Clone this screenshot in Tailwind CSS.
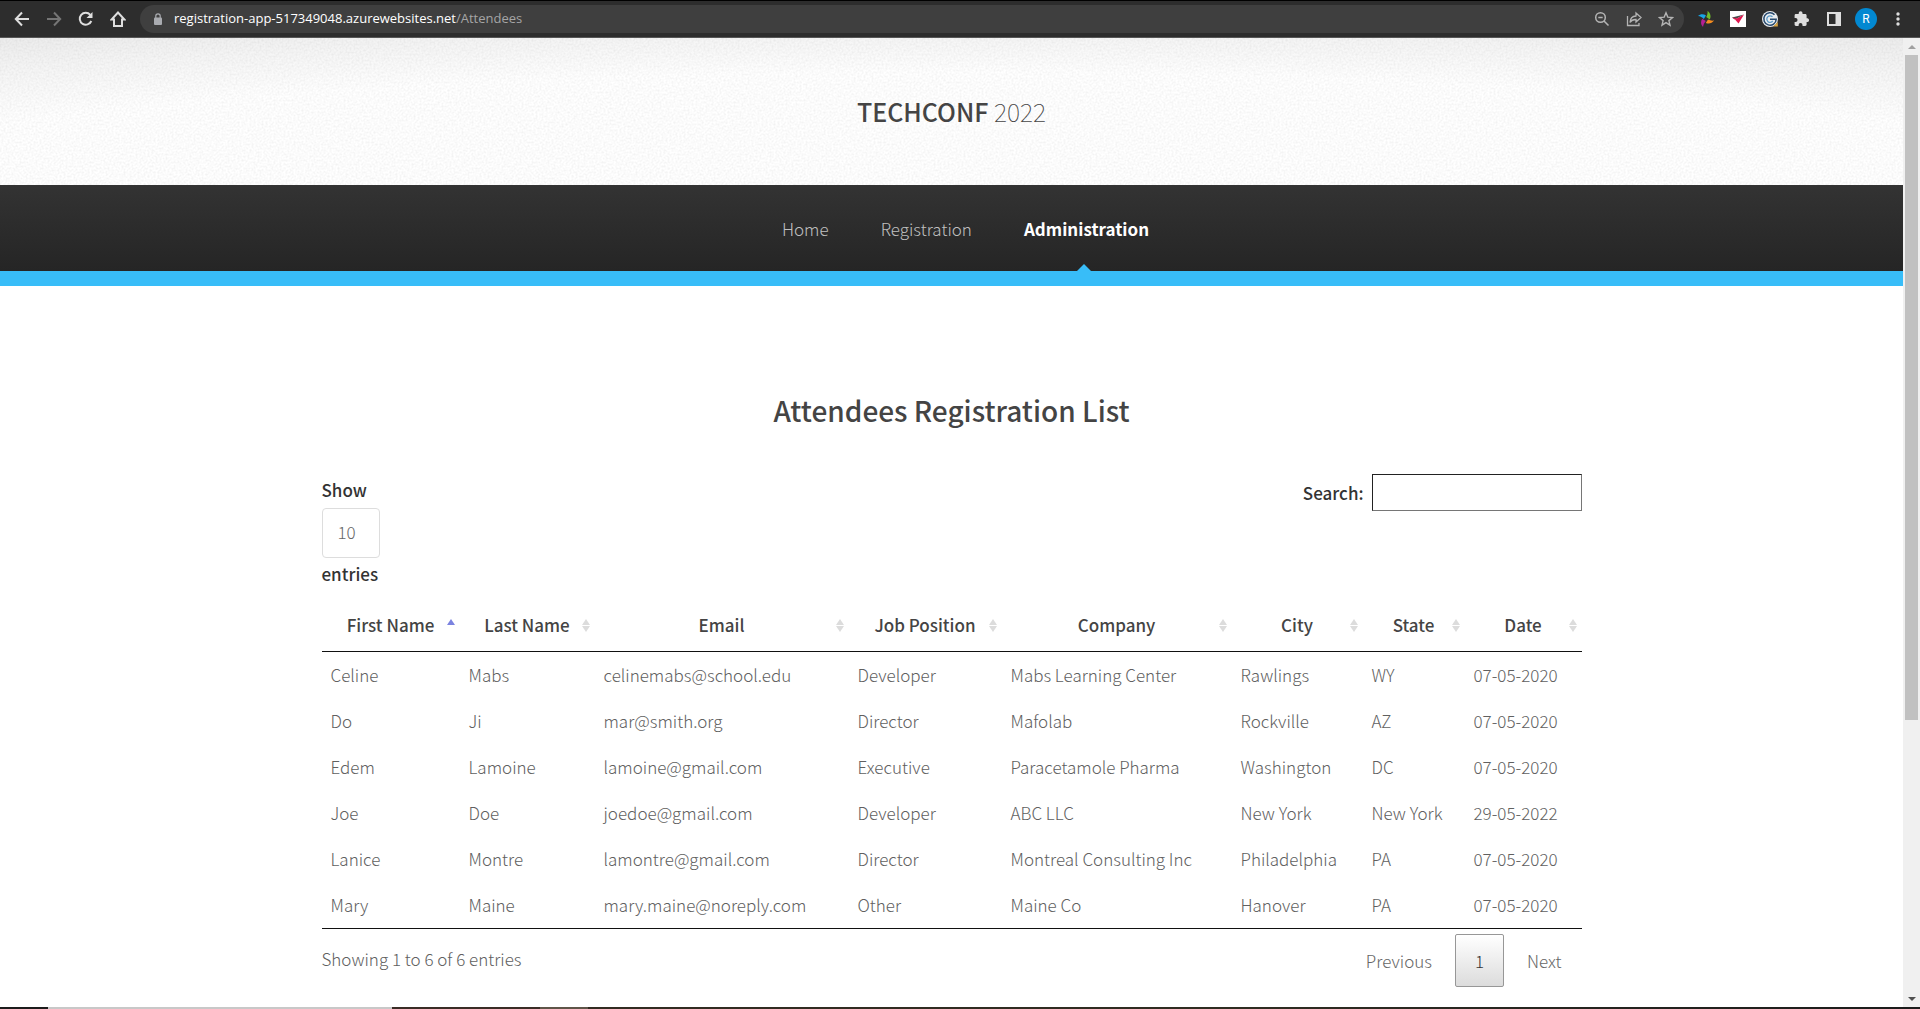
<!DOCTYPE html>
<html lang="en">
<head>
<meta charset="utf-8">
<title>TechConf 2022 - Attendees</title>
<script src="https://cdn.jsdelivr.net/npm/@tailwindcss/browser@4"></script>
</head>
<body class="flex h-screen flex-col overflow-hidden bg-white font-['Source_Sans_Pro','Noto_Sans_CJK_SC',sans-serif] text-[17px] font-light text-[#606060]">

<!-- Browser toolbar -->
<div class="flex h-[38px] shrink-0 items-center gap-4 border-t border-b border-t-black border-b-[#575757] bg-[#2d2d2d] pr-3.5 pl-3.5 text-[#dedede]">
  <button aria-label="Back" class="size-4"><svg viewBox="0 0 16 16" class="size-4" fill="none" stroke="currentColor" stroke-width="2"><path d="M15 8H2M8 1.500 1.800 8 8 14.500"/></svg></button>
  <button aria-label="Forward" class="size-4 text-[#757575]"><svg viewBox="0 0 16 16" class="size-4" fill="none" stroke="currentColor" stroke-width="2"><path d="M1 8h13M8 1.500 14.200 8 8 14.500"/></svg></button>
  <button aria-label="Reload" class="size-4"><svg viewBox="0 0 16 16" class="size-4" fill="none" stroke="currentColor" stroke-width="2"><path d="M13.300 10A6 6 0 1 1 12.300 3.800"/><path d="M14.500 1v6h-6z" fill="currentColor" stroke="none"/></svg></button>
  <button aria-label="Home" class="size-4"><svg viewBox="0 0 16 16" class="size-4" fill="none" stroke="currentColor" stroke-width="2"><path d="M8 1.500 1.500 8.500H4V15h8V8.500h2.500z"/></svg></button>
  <div class="-ml-0.5 flex h-7 flex-1 items-center rounded-full bg-[#3f3f3f] pr-2.5 pl-3.5 text-[#b4b4b4]">
    <svg viewBox="0 0 8 12" class="h-3 w-2" fill="none"><rect y="4.500" width="8" height="7.500" rx="1" fill="#a9abb0"/><path d="M1.800 5V3a2.200 2.200 0 0 1 4.400 0v2" stroke="#a9abb0" stroke-width="1.200"/></svg>
    <div class="ml-3 flex-1 font-['Open_Sans',sans-serif] text-[13px] font-normal text-[#a5a5a5]"><span class="text-white">registration-app-517349048.azurewebsites.net</span>/Attendees</div>
    <div class="flex gap-4">
      <button aria-label="Zoom" class="size-4"><svg viewBox="0 0 16 16" class="size-4" fill="none" stroke="currentColor" stroke-width="1.500"><circle cx="6.500" cy="6.500" r="4.800"/><path d="m10 10 4.500 4.500M4.300 6.500h4.400"/></svg></button>
      <button aria-label="Share" class="size-4"><svg viewBox="0 0 16 16" class="size-4" fill="none" stroke="currentColor" stroke-width="1.300"><path d="M1.500 5v9.500H13V12M4 11.500C4.200 7.500 6.500 5.200 10 5V2l5 4.500-5 4.500V8.500c-3-.1-4.800.9-6 3z"/></svg></button>
      <button aria-label="Bookmark" class="size-4"><svg viewBox="0 0 16 16" class="size-4" fill="none" stroke="currentColor" stroke-width="1.400"><path d="m8 1.800 1.800 4.300 4.700.4-3.600 3.100 1.100 4.600L8 11.700l-4 2.500 1.100-4.600-3.600-3.100 4.700-.4z"/></svg></button>
    </div>
  </div>
  <div class="-ml-0.5 flex items-center gap-4">
    <svg viewBox="0 0 16 16" class="size-4"><path d="M0 5C2.500 2.600 5.500 2.600 8 4.500L5.800 8C4.300 6.200 2.300 5.200 0 5z" fill="#18a5e8"/><path d="M9.500 0C12.600 2 13.300 5.500 11.800 8.500L8.200 6C9.300 4.200 9.800 2.300 9.500 0z" fill="#70bd2b"/><path d="M16 9.500C14 12.500 11 13.200 7.800 12L10 8.600c2 .9 4 1.300 6 .9z" fill="#f68c1f"/><path d="M5 16C2.500 13.500 2.500 10.500 4.200 7.800L7.800 10C6.300 11.800 5.300 13.800 5 16z" fill="#b51f93"/></svg>
    <svg viewBox="0 0 16 16" class="size-4"><path fill="#fff" d="M0 0h16v16H0z"/><path d="m14 3.500-12 3 3 2z" fill="#4a4a4a"/><path d="M14 3.500 5 8.500l3.500 4z" fill="#e0174f"/><path d="m2 6.500 3 2 2-1z" fill="#e0174f"/></svg>
    <svg viewBox="0 0 16 16" class="size-4" fill="none"><circle cx="8" cy="8" r="8" fill="#e9ecef"/><path d="M12.500 3.700a6.200 6.200 0 1 0 1.700 4.500H8" stroke="#27496d" stroke-width="1.500"/><path d="M10.500 5.800a3.300 3.300 0 1 0 .3 4.200" stroke="#5b9bc9" stroke-width="1.300"/><path d="m11 15.500 4.800-4.500v4.500z" fill="#d9a441"/></svg>
    <svg viewBox="0 0 16 16" class="size-4" fill="currentColor"><path d="M13.600 7.300h-1V4.400c0-.8-.6-1.400-1.400-1.400H8.500V2.100a1.900 1.900 0 0 0-3.800 0V3H1.900C1.100 3 .6 3.600.6 4.400V7h1a1.900 1.900 0 0 1 0 3.900h-1v2.700c0 .8.600 1.400 1.400 1.400h2.600v-1a1.900 1.900 0 0 1 3.900 0v1h2.700c.8 0 1.400-.6 1.400-1.400v-2.600h1a1.900 1.900 0 0 0 0-3.700z"/></svg>
    <svg viewBox="0 0 16 16" class="size-4"><path fill="#dedede" d="M1 1h14v14H1z"/><path fill="#2d2d2d" d="M3 3h6.500v10H3z"/></svg>
    <button class="-mx-[3px] size-[22px] rounded-full bg-[#0288d1] text-center font-[Roboto] text-xs leading-[22px] font-normal text-white">R</button>
    <button aria-label="Menu" class="size-4"><svg viewBox="0 0 16 16" class="size-4" fill="currentColor"><circle cx="8" cy="3" r="1.700"/><circle cx="8" cy="8" r="1.700"/><circle cx="8" cy="13" r="1.700"/></svg></button>
  </div>
</div>

<div class="flex min-h-0 flex-1">
  <div class="min-w-0 flex-1 overflow-hidden">
    <header>
      <div class="relative flex h-[147px] items-center justify-center bg-[radial-gradient(1480px_148px_at_50%_100%,#ffffff_76%,#f5f5f5_100%,#ebebeb_120%)] pb-0.5">
        <svg class="absolute inset-0 size-full opacity-10" aria-hidden="true"><filter id="paper" color-interpolation-filters="sRGB"><feTurbulence type="fractalNoise" baseFrequency="0.5" numOctaves="2"/><feColorMatrix values="0 0 0 0 .4  0 0 0 0 .4  0 0 0 0 .4  1.6 0 0 0 -.55"/></filter><rect width="100%" height="100%" filter="url(#paper)"/></svg>
        <h1 class="relative text-[25px] leading-8 text-[#444]"><a href="#"><strong class="font-medium">TECHCONF</strong> <span class="font-thin">2022</span></a></h1>
      </div>
      <nav class="border-b-[15px] border-[#38bdf8] bg-linear-to-b from-[#333] to-[#252525]">
        <ul class="flex h-[86px] items-stretch justify-center gap-[52px] pl-7 leading-[88px] text-[#c0c0c0]">
          <li><a href="#">Home</a></li>
          <li><a href="#">Registration</a></li>
          <li class="relative"><a href="#" class="font-bold text-white">Administration</a><span class="absolute bottom-0 left-1/2 -ml-2.5 border-x-[7px] border-b-[7px] border-x-transparent border-b-[#38bdf8]"></span></li>
        </ul>
      </nav>
    </header>

    <main class="mx-auto max-w-[1260px] pt-[106px]">
      <h2 class="mb-[46px] text-center text-[28px] leading-9 font-medium text-[#444]">Attendees Registration List</h2>

      <div class="mb-3 flex items-start justify-between font-medium text-[#333]">
        <label class="flex flex-col items-start leading-8">Show
          <select class="mt-0.5 h-[50px] w-[58px] appearance-none rounded border border-[#ddd] bg-white pb-0.5 pl-[15px] font-light text-[#666]"><option>10</option><option>25</option><option>50</option></select>
          entries</label>
        <label class="flex items-center gap-2">Search:
          <input type="search" class="h-[37px] w-[210px] border border-t-[#222] border-r-[#767676] border-b-[#767676] border-l-[#222] bg-white px-2"></label>
      </div>

      <table class="w-full table-fixed border-separate border-spacing-0 border-b border-[#111]">
        <colgroup><col class="w-[138px]"><col class="w-[135px]"><col class="w-[254px]"><col class="w-[153px]"><col class="w-[230px]"><col class="w-[131px]"><col class="w-[102px]"><col class="w-[117px]"></colgroup>
        <thead class="text-[#444]"><tr id="head"></tr></thead>
        <tbody id="rows"></tbody>
      </table>

      <div class="mt-[5px] flex items-start justify-between">
        <div class="leading-[50px]">Showing 1 to 6 of 6 entries</div>
        <div class="flex gap-0.5 text-[#666]">
          <button class="h-[53px] px-[21px]">Previous</button>
          <button class="h-[53px] w-[49px] rounded-xs border border-[#979797] bg-linear-to-b from-white to-[#dcdcdc] text-[#333]">1</button>
          <button class="h-[53px] pr-5 pl-[21px]">Next</button>
        </div>
      </div>
    </main>
  </div>

  <!-- Scrollbar -->
  <div class="flex w-[17px] shrink-0 flex-col items-center bg-[#f0f0f0]">
    <div class="flex h-[17px] items-center"><span class="border-x-4 border-b-4 border-x-transparent border-b-[#a0a0a0]"></span></div>
    <div class="h-[665px] w-[13px] bg-[#c1c1c1]"></div>
    <div class="mt-auto flex h-[17px] items-center"><span class="border-x-4 border-t-4 border-x-transparent border-t-[#505050]"></span></div>
  </div>
</div>

<!-- Edge of the desktop taskbar -->
<div class="flex h-0.5 shrink-0 bg-[#1c1c1c]">
  <div class="ml-12 w-[344px] bg-[#c8c8c8]"></div>
  <div class="w-[148px] bg-[#3a2c26]"></div>
  <div class="w-12 bg-[#5f5549]"></div>
  <div class="flex-1 bg-linear-to-r from-[#322b22] via-[#2f2c22] to-[#1c1c1c]"></div>
</div>

<script>
const heads = ['First Name', 'Last Name', 'Email', 'Job Position', 'Company', 'City', 'State', 'Date'];
const people = [
  ['Celine', 'Mabs', 'celinemabs@school.edu', 'Developer', 'Mabs Learning Center', 'Rawlings', 'WY', '07-05-2020'],
  ['Do', 'Ji', 'mar@smith.org', 'Director', 'Mafolab', 'Rockville', 'AZ', '07-05-2020'],
  ['Edem', 'Lamoine', 'lamoine@gmail.com', 'Executive', 'Paracetamole Pharma', 'Washington', 'DC', '07-05-2020'],
  ['Joe', 'Doe', 'joedoe@gmail.com', 'Developer', 'ABC LLC', 'New York', 'New York', '29-05-2022'],
  ['Lanice', 'Montre', 'lamontre@gmail.com', 'Director', 'Montreal Consulting Inc', 'Philadelphia', 'PA', '07-05-2020'],
  ['Mary', 'Maine', 'mary.maine@noreply.com', 'Other', 'Maine Co', 'Hanover', 'PA', '07-05-2020'],
];
const up = c => `<path d="M4 0l4 6H0z" fill="${c}"/>`;
const down = '<path d="M0 7h8l-4 6z" fill="#dcdcdc"/>';
document.getElementById('head').innerHTML = heads.map((h, i) =>
  `<th class="relative h-[50px] border-b border-[#111] p-0 pb-1 text-center font-medium">${h}<svg viewBox="0 0 8 13" class="absolute top-[17px] right-[5px] h-[13px] w-2">${i ? up('#dcdcdc') + down : up('#7b83e0')}</svg></th>`).join('');
document.getElementById('rows').innerHTML = people.map(p =>
  `<tr>${p.map(c => `<td class="h-[46px] p-0 pl-[9px] whitespace-nowrap">${c}</td>`).join('')}</tr>`).join('');
</script>
</body>
</html>
